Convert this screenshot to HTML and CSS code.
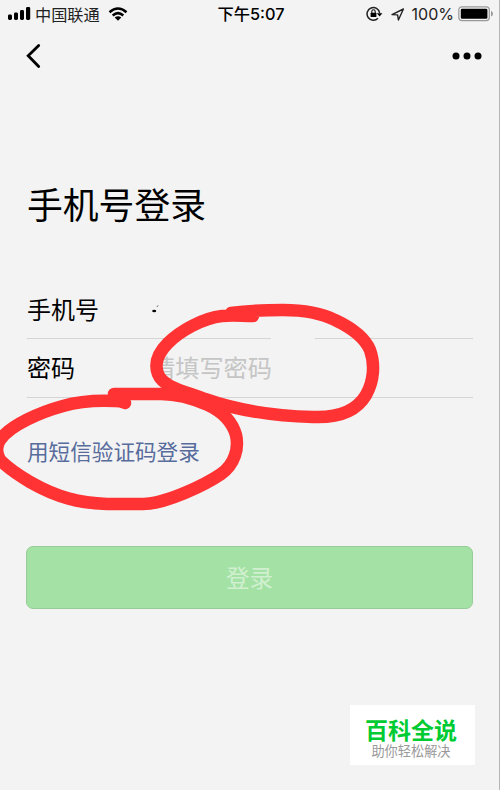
FILE: index.html
```
<!DOCTYPE html>
<html lang="zh-CN">
<head>
<meta charset="utf-8">
<title>手机号登录</title>
<link rel="stylesheet" href="styles.css">
</head>
<body>
<main class="screen">
  <header class="status">
    <div class="status-left">
      <svg class="signal" width="23" height="14" viewBox="0 0 23 14"><rect x="0" y="7.5" width="4" height="5.5" rx="1.4"/><rect x="6" y="5.5" width="4" height="7.5" rx="1.4"/><rect x="12" y="3" width="4" height="10" rx="1.4"/><rect x="18" y="0" width="4.2" height="13" rx="1.4"/></svg>
      <span class="carrier">中国联通</span>
      <svg class="wifi" width="20" height="14" viewBox="0 0 20 14"><path d="M1.5 5.2Q10-2.2 18.5 5.2M4.7 8.5Q10 3.7 15.3 8.5" fill="none" stroke="#000" stroke-width="2.5"/><path d="M6.7 10.5Q10 7.8 13.3 10.5L10 13.7Z"/></svg>
    </div>
    <time class="clock">下午5:07</time>
    <div class="status-right">
      <svg width="17" height="16" viewBox="0 0 17 16"><path d="M12 12.2A6.3 6.3 0 1 1 13.6 7" fill="none" stroke="#222" stroke-width="1.5"/><path d="M10.8 7.2h5.6L13.6 10.6Z"/><rect x="4.6" y="6.7" width="5.8" height="4.4" rx=".5"/><path d="M5.8 7V5.5a1.7 1.7 0 0 1 3.4 0V7" fill="none" stroke="#111" stroke-width="1.1"/></svg>
      <svg class="location" width="14" height="13" viewBox="0 0 14 13"><path d="M1 6.6L12.4 1 7.4 12 6.6 6.9Z" fill="none" stroke="#222" stroke-width="1.4" stroke-linejoin="round"/></svg>
      <span class="percent">100%</span>
      <svg class="battery" width="36" height="16" viewBox="0 0 36 16"><rect x=".8" y=".8" width="30.5" height="13.8" rx="3" fill="none" stroke="#999" stroke-width="1.2"/><rect x="2.8" y="2.7" width="26.6" height="10" rx="1.3"/><path d="M33 5q2 .5 2 2.7T33 10.4Z" fill="#999"/></svg>
    </div>
  </header>
  <nav class="nav">
    <svg width="15" height="26" viewBox="0 0 15 26"><path d="M12.7 2.4L2.2 12.8 12.7 23.6" fill="none" stroke="#000" stroke-width="2.8" stroke-linecap="round"/></svg>
    <svg width="31" height="8" viewBox="0 0 31 8"><circle cx="4" cy="4" r="3.5"/><circle cx="15" cy="4" r="3.5"/><circle cx="26" cy="4" r="3.5"/></svg>
  </nav>
  <h1 class="title">手机号登录</h1>
  <form class="form">
    <div class="field phone">
      <span class="label">手机号</span>
      <svg width="8" height="10" viewBox="0 0 8 10"><ellipse cx="3.2" cy="7" rx="2" ry="1.3"/><path d="M6 2.8l1-1.3" stroke="#444"/></svg>
    </div>
    <div class="field"><span class="label">密码</span><span class="placeholder">请填写密码</span></div>
    <a class="sms">用短信验证码登录</a>
    <button class="submit" type="button">登录</button>
  </form>
  <svg class="marks" width="500" height="790" viewBox="0 0 500 790">
    <path d="M253 316C242 316 233 315 222 316C203 318 180 331 168 343C156 355 155 366 158 374C163 387 184 391 205 399C239 411 275 416 313 417C338 418 356 412 366 395C374 381 375 364 370 350C364 336 350 327 335 320C319 312 302 310 283 310C260 310 246 311 231 313"/>
    <path d="M125 403Q121 401 115 401C95 400 80 401 63 406C41 412 10 425 0 440Q-6 449 0 460C6 466 18 475 30 482C58 498 80 503 107 504L143 504C165 504 205 485 221 474C235 464 239 448 236 435C232 421 223 412 208 405C194 399 178 394 161 394L114 394"/>
  </svg>
  <aside class="badge"><strong class="brand">百科全说</strong><span class="slogan">助你轻松解决</span></aside>
</main>
</body>
</html>
```
FILE: styles.css
```
* { box-sizing: border-box; }
body { margin: 0; font-family: "Noto Sans CJK SC", sans-serif; color: #000; }
.screen { position: relative; width: 500px; height: 790px; overflow: hidden; background: #f3f3f3; border-right: 1px solid #b5b5b5; }
svg { display: block; flex: none; }
.status { display: grid; grid-template-columns: 1fr auto 1fr; height: 27px; padding: 0 7px 0 8px; line-height: 27px; }
.status-left, .status-right { display: flex; align-items: center; }
.status-right { justify-content: flex-end; }
.carrier { margin-left: 4px; font-size: 16.2px; color: #222; }
.wifi { margin-left: 8px; }
.clock { padding: 1px 0 0 2px; font-family: Inter, "Noto Sans CJK SC", sans-serif; font-size: 16.3px; font-weight: 500; }
.location { margin-left: 8px; }
.percent { margin-left: 7px; padding-top: 1px; font-family: Inter, sans-serif; font-size: 16px; color: #222; }
.battery { margin-left: 4px; margin-right: -2px; }
.nav { display: flex; justify-content: space-between; align-items: center; height: 57px; padding: 0 16px 0 26px; }
.title { margin: 92px 0 0 27px; font-size: 35.8px; line-height: 54px; font-weight: 400; }
.form { margin: 51px 26px 0 27px; }
.field { display: flex; align-items: center; height: 59px; padding-bottom: 3px; border-bottom: 1px solid #d5d5d5; font-size: 24px; }
.phone { height: 58px; border: 0; background: linear-gradient(90deg, #d5d5d5 244px, transparent 244px 288px, #d5d5d5 288px) bottom / 100% 1px no-repeat; }
.label { width: 124px; }
.placeholder { font-size: 24.2px; color: #c5c5c5; clip-path: inset(0 0 0 12px); }
.sms { display: block; margin-top: 37px; font-size: 21.6px; line-height: 32px; color: #586c9c; }
.submit { display: block; width: 447px; height: 63px; margin: 79px 0 0 -1px; padding: 0 0 2px; border: 1px solid #97cd98; border-radius: 7px; background: #a4e1a5; color: #d0f0d0; font: 23.6px "Noto Sans CJK SC", sans-serif; }
.marks { position: absolute; left: 0; top: 0; fill: none; stroke: #ff3333; stroke-width: 12.5; stroke-linecap: round; stroke-linejoin: round; pointer-events: none; }
.badge { position: absolute; left: 350px; top: 705px; width: 125px; height: 60px; padding: 11px 3px 0 0; display: flex; flex-direction: column; align-items: center; background: #fff; }
.brand { font-size: 23px; line-height: 27px; font-weight: 700; color: #00cb32; }
.slogan { font-size: 13.2px; line-height: 16px; color: #999; }
```
